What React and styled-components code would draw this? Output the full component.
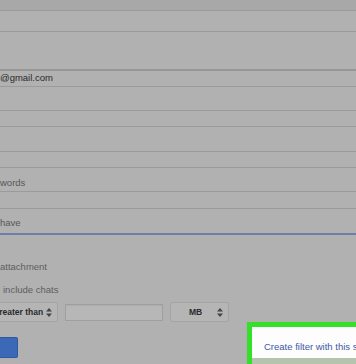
import styled, { createGlobalStyle } from "styled-components";

const GlobalStyle = createGlobalStyle`
  html, body {
    margin: 0;
    padding: 0;
    background: #b1b1b1;
  }
  * {
    box-sizing: border-box;
  }
`;

const Page = styled.div`
  width: 356px;
  height: 364px;
  overflow: hidden;
  background-color: #b1b1b1;
  font-family: "Liberation Sans", Arial, sans-serif;
  display: flex;
  flex-direction: column;
`;

const Fields = styled.div`
  display: flex;
  flex-direction: column;
`;

const TopBand = styled.div`
  height: 11px;
  background-color: #a8a8a8;
  border-bottom: 1px solid #9a9a9a;
`;

const Field = styled.div`
  height: ${(p) => p.$h + (p.$line || 1)}px;
  border-bottom: ${(p) => p.$line || 1}px solid ${(p) => p.$color || "#9b9b9b"};
  padding-top: ${(p) => p.$pad || 0}px;
  font-size: 9.5px;
  line-height: 12px;
  color: ${(p) => (p.$dark ? "#2a2a2a" : "#575757")};
  white-space: nowrap;
`;

const Options = styled.div`
  display: flex;
  flex-direction: column;
  padding-top: 26px;
`;

const OptionLabel = styled.div`
  font-size: 9.5px;
  line-height: 12px;
  color: #5e5e5e;
  padding-left: ${(p) => p.$indent || 0}px;
  margin-top: ${(p) => p.$gap || 0}px;
  white-space: nowrap;
`;

const SizeRow = styled.div`
  display: flex;
  align-items: center;
  gap: 7px;
  margin-top: 6px;
  height: 20px;
`;

const Select = styled.div`
  height: 20px;
  width: ${(p) => p.$w}px;
  margin-left: ${(p) => p.$shift || 0}px;
  flex-shrink: 0;
  display: flex;
  align-items: center;
  justify-content: space-between;
  padding: 0 5px 0 ${(p) => p.$padLeft}px;
  background-color: #b5b5b5;
  border: 1px solid #a4a4a4;
  border-radius: 2px;
  font-size: 8.5px;
  font-weight: bold;
  color: #2b2b2b;
  white-space: nowrap;
`;

const SizeInput = styled.div`
  width: 98px;
  height: 17px;
  flex-shrink: 0;
  background-color: #b7b7b7;
  border: 1px solid #9f9f9f;
  box-shadow: inset 0 1px 1px rgba(0, 0, 0, 0.06);
`;

const Footer = styled.div`
  display: flex;
  align-items: flex-start;
  gap: 229px;
  flex: 1;
`;

const SearchButton = styled.div`
  width: 18px;
  height: 21px;
  margin-top: 15px;
  flex-shrink: 0;
  background-color: #3b69b8;
  border: 1px solid #30589c;
  border-left: none;
  border-radius: 0 2px 2px 0;
`;

const Highlight = styled.div`
  width: 140px;
  flex-shrink: 0;
  height: 100%;
  border-top: 5px solid #35e02a;
  border-left: 5px solid #35e02a;
  display: flex;
  flex-direction: column;
`;

const HighlightBody = styled.div`
  height: 31px;
  background-color: #fdfdfd;
  padding: 14px 0 0 12px;
  font-size: 9.5px;
  line-height: 12px;
  color: #3d58a6;
  white-space: nowrap;
`;

const HighlightFade = styled.div`
  flex: 1;
  background-color: #b6c4ae;
`;

const Arrows = () => (
  <svg width="6" height="9" viewBox="0 0 6 9">
    <polygon points="3,0 6,3.5 0,3.5" fill="#444" />
    <polygon points="0,5.5 6,5.5 3,9" fill="#444" />
  </svg>
);

const App = () => {
  return (
    <Page>
      <GlobalStyle />
      <Fields>
        <TopBand />
        <Field $h={20} />
        <Field $h={37} $line={2} $color="#979797" />
        <Field $h={15} $pad={1} $dark>
          @gmail.com
        </Field>
        <Field $h={23} />
        <Field $h={15} />
        <Field $h={24} />
        <Field $h={15} />
        <Field $h={23} $pad={9}>
          words
        </Field>
        <Field $h={16} />
        <Field $h={24} $pad={8} $line={2} $color="#6e7ea6">
          have
        </Field>
      </Fields>
      <Options>
        <OptionLabel>attachment</OptionLabel>
        <OptionLabel $gap={11} $indent={3}>
          include chats
        </OptionLabel>
        <SizeRow>
          <Select $w={71} $shift={-13} $padLeft={6}>
            greater than
            <Arrows />
          </Select>
          <SizeInput />
          <Select $w={59} $padLeft={18}>
            MB
            <Arrows />
          </Select>
        </SizeRow>
      </Options>
      <Footer>
        <SearchButton />
        <Highlight>
          <HighlightBody>Create filter with this search</HighlightBody>
          <HighlightFade />
        </Highlight>
      </Footer>
    </Page>
  );
};

export default App;
